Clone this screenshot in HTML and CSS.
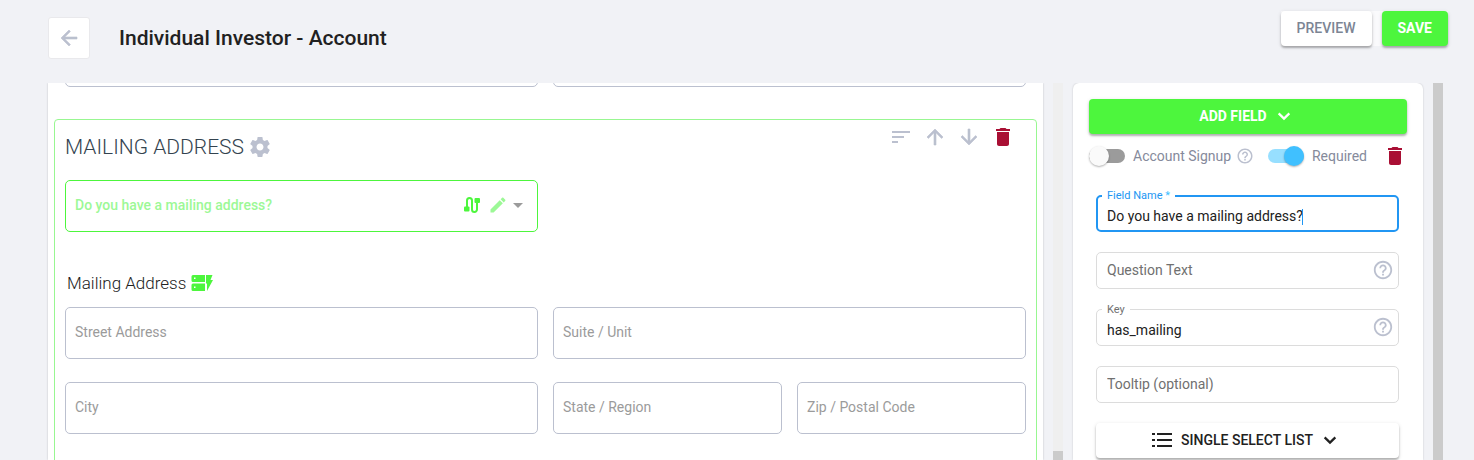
FILE: index.html
```html
<!DOCTYPE html>
<html lang="en">
<head>
    <meta charset="UTF-8">
    <meta name="viewport" content="width=device-width, initial-scale=1.0">
    <title>Individual Investor - Account</title>
    <link rel="stylesheet" href="styles.css">
</head>
<body>
    <!-- Shared icon shapes -->
    <svg class="icon-defs" aria-hidden="true">
        <symbol id="icon-trash" viewBox="0 0 24 24"><path d="M6 19c0 1.100.9 2 2 2h8c1.100 0 2-.9 2-2V7H6v12zM19 4h-3.500l-1-1h-5l-1 1H5v2h14V4z"/></symbol>
        <symbol id="icon-help" viewBox="0 0 24 24"><path d="M11 18h2v-2h-2v2zm1-16C6.480 2 2 6.480 2 12s4.480 10 10 10 10-4.480 10-10S17.520 2 12 2zm0 18c-4.410 0-8-3.590-8-8s3.590-8 8-8 8 3.590 8 8-3.590 8-8 8zm0-14c-2.210 0-4 1.790-4 4h2c0-1.100.9-2 2-2s2 .9 2 2c0 2-3 1.750-3 5h2c0-2.250 3-2.500 3-5 0-2.210-1.790-4-4-4z"/></symbol>
        <symbol id="icon-chevron" viewBox="0 0 24 24"><path d="M4 8l8 8 8-8" fill="none" stroke="currentColor" stroke-width="3.400"/></symbol>
    </svg>

    <header class="header">
        <button class="back-btn" aria-label="Back">
            <svg class="icon" viewBox="0 0 24 24"><path d="M20 11H7.830l5.590-5.590L12 4l-8 8 8 8 1.410-1.410L7.830 13H20v-2z" stroke="currentColor" stroke-width=".6"/></svg>
        </button>
        <h1>Individual Investor - Account</h1>
        <div class="header-actions">
            <button class="btn">PREVIEW</button>
            <button class="btn btn-green">SAVE</button>
        </div>
    </header>

    <div class="workspace">
        <main class="form-panel">
            <div class="field-grid scrolled-row">
                <input class="field wide" type="text" aria-label="Address">
                <input class="field wide" type="text" aria-label="Unit">
            </div>

            <section class="form-section">
                <div class="section-header">
                    <h2>MAILING ADDRESS</h2>
                    <button class="icon-btn" aria-label="Section settings">
                        <svg class="icon" viewBox="0 0 24 24"><path d="M19.430 12.980c.04-.32.07-.64.07-.98s-.03-.66-.07-.98l2.110-1.650c.19-.15.24-.42.12-.64l-2-3.460c-.12-.22-.39-.3-.61-.22l-2.490 1c-.52-.4-1.080-.73-1.690-.98l-.38-2.650C14.460 2.180 14.250 2 14 2h-4c-.25 0-.46.18-.49.42l-.38 2.650c-.61.25-1.170.59-1.690.98l-2.490-1c-.23-.09-.49 0-.61.22l-2 3.460c-.13.22-.07.49.12.64l2.110 1.650c-.04.32-.07.65-.07.98s.03.66.07.98l-2.110 1.650c-.19.15-.24.42-.12.64l2 3.460c.12.22.39.3.61.22l2.490-1c.52.4 1.080.73 1.690.98l.38 2.650c.03.24.24.42.49.42h4c.25 0 .46-.18.49-.42l.38-2.650c.61-.25 1.170-.59 1.690-.98l2.490 1c.23.09.49 0 .61-.22l2-3.460c.12-.22.07-.49-.12-.64l-2.110-1.650zM12 15.500c-1.930 0-3.500-1.570-3.500-3.500s1.570-3.500 3.500-3.500 3.500 1.570 3.500 3.500-1.570 3.500-3.500 3.500z"/></svg>
                    </button>
                    <div class="section-actions">
                        <button class="icon-btn" aria-label="Sort">
                            <svg class="icon" viewBox="0 0 24 24"><path d="M3 18h6v-2H3v2zM3 6v2h18V6H3zm0 7h12v-2H3v2z"/></svg>
                        </button>
                        <button class="icon-btn" aria-label="Move up">
                            <svg class="icon" viewBox="0 0 24 24"><path d="M4 12l1.410 1.410L11 7.830V20h2V7.830l5.580 5.590L20 12l-8-8-8 8z" stroke="currentColor" stroke-width=".6"/></svg>
                        </button>
                        <button class="icon-btn" aria-label="Move down">
                            <svg class="icon" viewBox="0 0 24 24"><path d="M20 12l-1.410-1.410L13 16.170V4h-2v12.170l-5.580-5.590L4 12l8 8 8-8z" stroke="currentColor" stroke-width=".6"/></svg>
                        </button>
                        <button class="icon-btn danger" aria-label="Delete section">
                            <svg class="icon"><use href="#icon-trash"/></svg>
                        </button>
                    </div>
                </div>

                <div class="field-grid">
                    <div class="choice wide">
                        <select class="field" aria-label="Do you have a mailing address?">
                            <option>Do you have a mailing address?</option>
                        </select>
                        <div class="choice-icons">
                            <svg class="route-icon" viewBox="0 0 16 16">
                                <path d="M3 11V3.500a2.400 2.400 0 0 1 5 0v9a2.400 2.400 0 0 0 5 0V5" fill="none" stroke="currentColor" stroke-width="2"/>
                                <rect x="0" y="9.500" width="5.500" height="5" rx="1"/>
                                <rect x="10.500" y="1" width="5.500" height="5" rx="1"/>
                            </svg>
                            <svg class="pencil-icon" viewBox="0 0 24 24"><path d="M3 17.250V21h3.750L17.810 9.940l-3.750-3.750L3 17.250zM20.710 7.040c.39-.39.39-1.020 0-1.410l-2.340-2.340c-.39-.39-1.020-.39-1.410 0l-1.830 1.830 3.750 3.750 1.830-1.830z"/></svg>
                            <svg class="arrow-icon" viewBox="0 0 10 5"><path d="M0 0l5 5 5-5z"/></svg>
                        </div>
                    </div>
                </div>

                <h3>
                    Mailing Address
                    <svg class="dynamic-icon" viewBox="0 0 22 18"><path fill-rule="evenodd" d="M2 1h12v7H2a1.500 1.500 0 0 1-1.500-1.500v-4A1.500 1.500 0 0 1 2 1zM3 3.500v1.500h1.500V3.500zM2 9.500h12V17H2a1.500 1.500 0 0 1-1.500-1.500V11A1.500 1.500 0 0 1 2 9.500zM3 12.500V14h1.500v-1.500zM15 1h6.500l-2 5H22l-6 11v-7.500h-1z"/></svg>
                </h3>

                <div class="field-grid">
                    <input class="field wide" type="text" placeholder="Street Address" aria-label="Street Address">
                    <input class="field wide" type="text" placeholder="Suite / Unit" aria-label="Suite / Unit">
                    <input class="field wide" type="text" placeholder="City" aria-label="City">
                    <input class="field" type="text" placeholder="State / Region" aria-label="State / Region">
                    <input class="field" type="text" placeholder="Zip / Postal Code" aria-label="Zip / Postal Code">
                </div>
            </section>
        </main>
        <div class="scrollbar"><div class="scrollbar-thumb"></div></div>

        <aside class="settings-panel">
            <button class="btn btn-green">
                ADD FIELD
                <svg class="chevron"><use href="#icon-chevron"/></svg>
            </button>

            <div class="toggle-row">
                <input class="switch" type="checkbox" id="accountSignup">
                <label for="accountSignup">Account Signup</label>
                <svg class="help-small"><use href="#icon-help"/></svg>
                <input class="switch" type="checkbox" id="required" checked>
                <label for="required">Required</label>
                <button class="icon-btn danger" aria-label="Delete field">
                    <svg class="icon"><use href="#icon-trash"/></svg>
                </button>
            </div>

            <div class="settings-fields">
                <div class="setting focused">
                    <input type="text" id="fieldName" value="Do you have a mailing address?">
                    <label for="fieldName">Field Name <span class="star">*</span></label>
                    <span class="caret"></span>
                </div>
                <div class="setting">
                    <input type="text" placeholder="Question Text" aria-label="Question Text">
                    <svg class="help"><use href="#icon-help"/></svg>
                </div>
                <div class="setting">
                    <input type="text" id="fieldKey" value="has_mailing">
                    <label for="fieldKey">Key</label>
                    <svg class="help"><use href="#icon-help"/></svg>
                </div>
                <div class="setting">
                    <input type="text" placeholder="Tooltip (optional)" aria-label="Tooltip (optional)">
                </div>
                <button class="btn btn-list">
                    <svg class="list-icon" viewBox="0 0 20 16"><path d="M5 1h15v2H5zM5 7h15v2H5zM5 13h15v2H5zM0 1h3v2H0zM0 7h3v2H0zM0 13h3v2H0z"/></svg>
                    SINGLE SELECT LIST
                    <svg class="chevron"><use href="#icon-chevron"/></svg>
                </button>
            </div>
        </aside>
        <div class="scrollbar scrollbar-full"></div>
    </div>
</body>
</html>
```

FILE: styles.css
```css
* {
    box-sizing: border-box;
}
body {
    margin: 0;
    height: 100vh;
    display: flex;
    flex-direction: column;
    overflow: hidden;
    background: #f1f2f6;
    font-family: Roboto, "Liberation Sans", sans-serif;
    font-size: 14px;
    color: #212121;
}
h1, h2, h3 {
    margin: 0;
}
button, input, select {
    font: inherit;
    margin: 0;
}
button {
    cursor: pointer;
}
svg {
    display: block;
    flex: none;
    fill: currentColor;
}
.icon-defs {
    position: absolute;
    width: 0;
    height: 0;
}
.icon {
    width: 24px;
    height: 24px;
}
.icon-btn {
    padding: 0;
    border: none;
    background: none;
    color: #bbc0cf;
}
.danger {
    color: #a90f34;
}

/* Header */
.header {
    flex: none;
    display: flex;
    align-items: flex-start;
    padding: 11px 26px 24px 48px;
}
.back-btn {
    display: flex;
    align-items: center;
    justify-content: center;
    width: 42px;
    height: 42px;
    margin-top: 6px;
    padding: 0;
    border: 1px solid #e9e9ec;
    border-radius: 3px;
    background: #fff;
    color: #bbc0cf;
}
.header h1 {
    margin: 6px 0 0 29px;
    font-size: 21px;
    line-height: 42px;
    font-weight: 500;
}
.header-actions {
    display: flex;
    gap: 10px;
    margin-left: auto;
    background: #fafafc;
}
.btn {
    display: flex;
    align-items: center;
    justify-content: center;
    height: 35px;
    padding: 0 16px 1px;
    border: none;
    border-radius: 4px;
    background: #fff;
    color: #7c8594;
    font-weight: 500;
    box-shadow: 0 2px 2px rgba(0,0,0,0.25), 0 1px 4px rgba(0,0,0,0.12);
}
.btn-green {
    background: #4df63d;
    color: #fff;
    font-weight: 700;
}
.chevron {
    width: 16px;
    height: 16px;
    margin: 0 5px 0 9px;
}

/* Form */
.workspace {
    flex: 1;
    display: flex;
    min-height: 0;
    overflow: hidden;
}
.form-panel {
    flex: 1;
    min-width: 0;
    margin-left: 48px;
    padding: 0 6px;
    overflow: hidden;
    background: #fff;
    box-shadow: 0 0 2px rgba(0,0,0,0.2);
}
.field-grid {
    display: grid;
    grid-template-columns: repeat(4, minmax(0, 1fr));
    gap: 23px 15px;
}
.wide {
    grid-column: span 2;
}
.scrolled-row {
    margin: -48px 11px 32px;
}
.form-section {
    padding: 5px 10px 60px;
    border: 1px solid #98f791;
    border-radius: 4px;
}
.section-header {
    display: flex;
    align-items: center;
    height: 43px;
    margin-bottom: 12px;
}
.section-header h2 {
    margin-right: 4px;
    font-size: 21px;
    line-height: 24px;
    font-weight: 300;
    color: #33434f;
}
.section-actions {
    display: flex;
    gap: 10px;
    align-self: flex-start;
    margin-left: auto;
    margin-right: 11px;
}
.field {
    width: 100%;
    height: 52px;
    padding: 0 9px 2px;
    border: 1px solid #bbc0cf;
    border-radius: 5px;
    background: #fff;
    outline: none;
}
.field::placeholder {
    color: #9b9b9b;
}
.choice {
    position: relative;
}
.choice .field {
    appearance: none;
    border-color: #4df63d;
    color: #9cf896;
    font-weight: 500;
}
.choice-icons {
    position: absolute;
    top: 0;
    right: 15px;
    height: 100%;
    display: flex;
    align-items: center;
    padding-bottom: 2px;
    pointer-events: none;
}
.route-icon {
    width: 16px;
    height: 16px;
    color: #4df63d;
}
.pencil-icon {
    width: 20px;
    height: 20px;
    margin: 0 5px 0 8px;
    color: #9cf896;
}
.arrow-icon {
    width: 10px;
    height: 5px;
    color: #9b9b9b;
}
.form-section h3 {
    display: flex;
    align-items: center;
    gap: 5px;
    height: 24px;
    margin: 39px 0 12px 2px;
    font-size: 17px;
    font-weight: 300;
}
.dynamic-icon {
    width: 22px;
    height: 18px;
    color: #4df63d;
}

/* Scrollbars */
.scrollbar {
    flex: none;
    display: flex;
    flex-direction: column;
    justify-content: flex-end;
    width: 10px;
    margin: 0 10px;
    background: #efefef;
}
.scrollbar-thumb {
    height: 9px;
    background: #cbcbcb;
}
.scrollbar-full {
    margin-right: 31px;
    background: #cbcbcb;
}

/* Field settings */
.settings-panel {
    flex: none;
    display: flex;
    flex-direction: column;
    width: 350px;
    padding: 16px 16px 0;
    border-radius: 6px 6px 0 0;
    background: #fff;
    box-shadow: 0 0 2px rgba(0,0,0,0.2);
}
.settings-panel .btn {
    flex: none;
}
.toggle-row {
    display: flex;
    align-items: center;
    height: 24px;
    margin: 10px 0 27px;
    color: #858a9b;
}
.switch {
    appearance: none;
    display: flex;
    align-items: center;
    flex: none;
    width: 36px;
    height: 14px;
    border-radius: 7px;
    background: #9b9b9b;
}
.switch::before {
    content: "";
    width: 20px;
    height: 20px;
    flex: none;
    border-radius: 50%;
    background: #fafafa;
    box-shadow: 0 1px 2px rgba(0,0,0,0.3);
}
.switch:checked {
    justify-content: flex-end;
    background: #97dfff;
}
.switch:checked::before {
    background: #40c0ff;
}
.toggle-row label {
    margin-left: 8px;
}
.help-small {
    width: 18px;
    height: 18px;
    margin: 0 auto 0 5px;
    color: #bbc0cf;
}
.toggle-row .icon-btn {
    margin-left: 16px;
}
.settings-fields {
    display: flex;
    flex-direction: column;
    gap: 20px;
    padding: 0 8px 0 7px;
}
.setting {
    position: relative;
}
.setting input {
    display: block;
    width: 100%;
    height: 37px;
    padding: 0 36px 2px 10px;
    border: 1px solid #dcdcdc;
    border-radius: 5px;
    background: #fff;
    color: #212121;
    outline: none;
}
.setting input::placeholder {
    color: #707070;
}
.setting input[value] {
    padding-top: 5px;
    padding-bottom: 0;
}
.setting label {
    position: absolute;
    top: -6px;
    left: 6px;
    padding: 0 5px;
    background: #fff;
    color: #707070;
    font-size: 11px;
    line-height: 13px;
}
.setting.focused input {
    border: 2px solid #2196f3;
    padding-left: 9px;
}
.setting.focused label {
    color: #2196f3;
}
.star {
    color: #40c0ff;
}
.caret {
    position: absolute;
    top: 14px;
    left: 206px;
    width: 1px;
    height: 16px;
    background: #2196f3;
}
.help {
    position: absolute;
    top: 7px;
    right: 5px;
    width: 22px;
    height: 22px;
    color: #bbc0cf;
}
.btn-list {
    color: #212121;
}
.list-icon {
    width: 20px;
    height: 16px;
    margin-right: 9px;
}
```
